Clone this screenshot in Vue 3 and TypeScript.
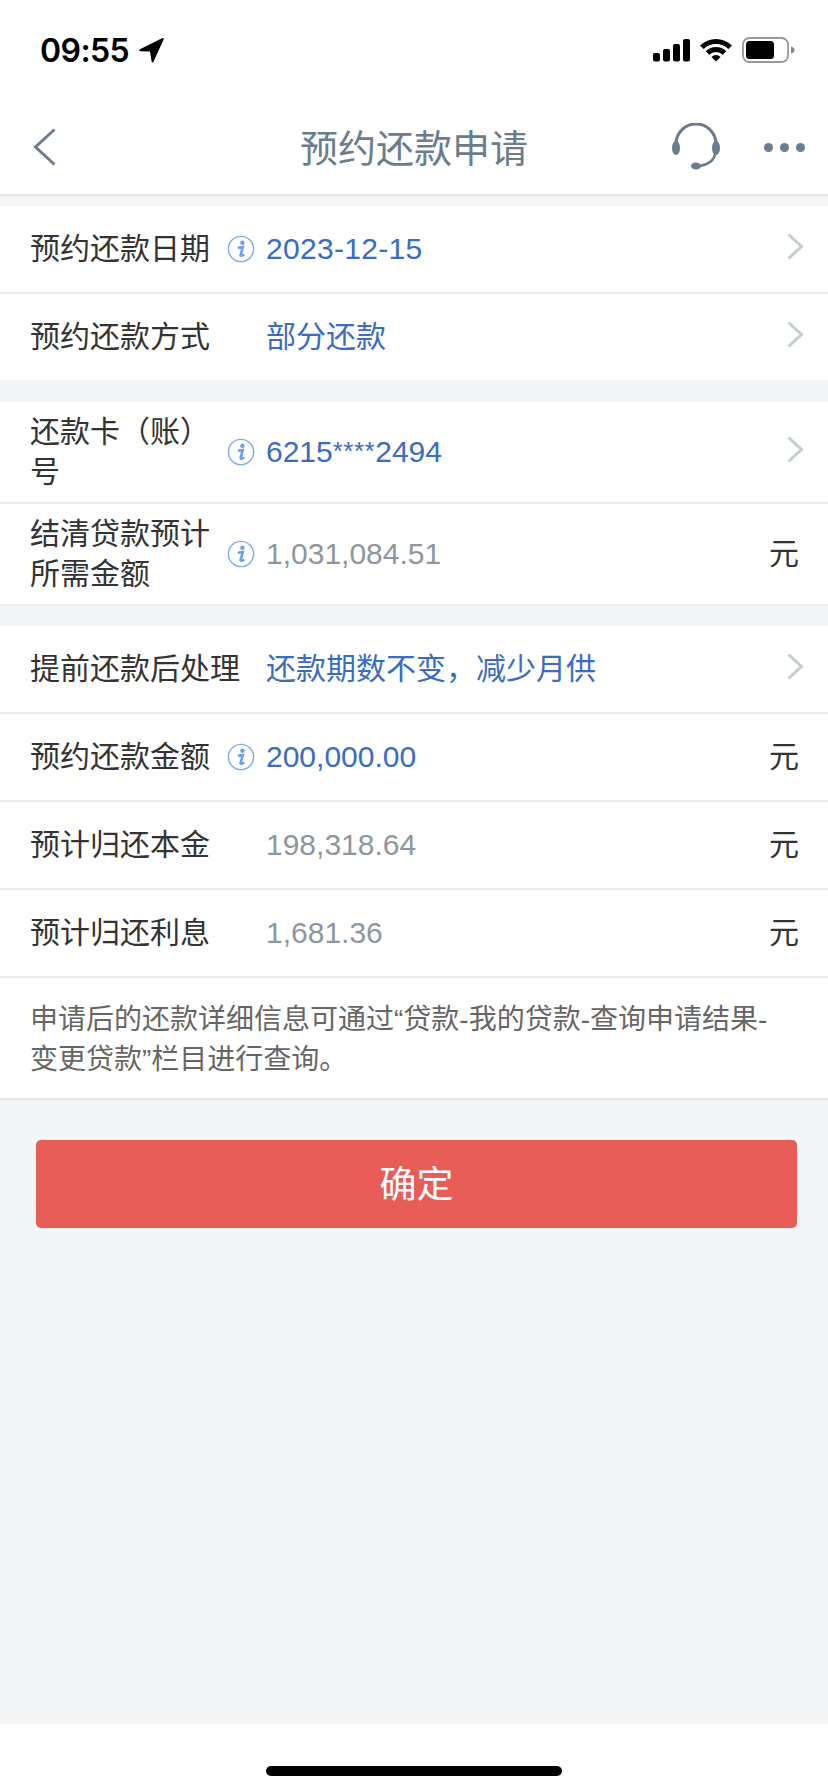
<script setup lang="ts">
type Row = {
  label: string;
  value: string;
  info?: boolean;
  tone: "blue" | "gray";
  end: "arrow" | "unit";
  tall?: boolean;
  wide?: boolean;
  cjk?: boolean;
  date?: boolean;
};

const groupOne: Row[] = [
  { label: "预约还款日期", value: "2023-12-15", info: true, tone: "blue", end: "arrow", date: true },
  { label: "预约还款方式", value: "部分还款", tone: "blue", end: "arrow", cjk: true },
];
const groupTwo: Row[] = [
  { label: "还款卡（账）号", value: "6215****2494", info: true, tone: "blue", end: "arrow", tall: true },
  { label: "结清贷款预计所需金额", value: "1,031,084.51", info: true, tone: "gray", end: "unit", tall: true },
];
const groupThree: Row[] = [
  { label: "提前还款后处理", value: "还款期数不变，减少月供", tone: "blue", end: "arrow", wide: true, cjk: true },
  { label: "预约还款金额", value: "200,000.00", info: true, tone: "blue", end: "unit" },
  { label: "预计归还本金", value: "198,318.64", tone: "gray", end: "unit" },
  { label: "预计归还利息", value: "1,681.36", tone: "gray", end: "unit" },
];
const groups = [groupOne, groupTwo, groupThree];

// the card number's asterisks are drawn smaller than the digits
const splitStars = (value: string) => value.split(/(\*+)/);
</script>

<template>
  <div class="page">
    <div class="status-bar">
      <div class="time">
        <span>09:55</span>
        <svg class="location" width="25" height="25" viewBox="0 0 25 25">
          <path d="M24.6 1.6 L14.6 23.6 Q13.4 25.4 12.6 23.4 L11 13.6 L1.4 13.2 Q-0.6 12.4 1 11.2 L22.4 0.4 Q25.4 -0.6 24.6 1.6 Z" fill="#000" />
        </svg>
      </div>
      <div class="status-icons">
        <svg width="37" height="23" viewBox="0 0 37 23">
          <rect x="0" y="14" width="7" height="8.5" rx="2" fill="#000" />
          <rect x="10" y="10" width="7" height="12.5" rx="2" fill="#000" />
          <rect x="20" y="5" width="7" height="17.5" rx="2" fill="#000" />
          <rect x="30" y="0" width="7" height="22.5" rx="2" fill="#000" />
        </svg>
        <svg width="32" height="23" viewBox="0 0 32 23">
          <path d="M0.1 6.6 A22.5 22.5 0 0 1 31.9 6.6 L28.4 10.1 A17.5 17.5 0 0 0 3.6 10.1 Z" fill="#000" />
          <path d="M5.8 12.3 A14.5 14.5 0 0 1 26.2 12.3 L22.7 15.8 A9.5 9.5 0 0 0 9.3 15.8 Z" fill="#000" />
          <path d="M11.4 17.9 A6.5 6.5 0 0 1 20.6 17.9 L16 22.5 Z" fill="#000" />
        </svg>
        <svg width="54" height="26" viewBox="0 0 54 26">
          <rect x="1" y="1" width="45" height="24" rx="6.5" fill="none" stroke="#999" stroke-width="1.8" />
          <rect x="4" y="4" width="28" height="18" rx="3.5" fill="#000" />
          <path d="M49 9.5 Q52.5 10.5 52.5 13 Q52.5 15.5 49 16.5 Z" fill="#888" />
        </svg>
      </div>
    </div>

    <header class="nav">
      <div class="nav-left">
        <svg width="24" height="38" viewBox="0 0 24 38">
          <path d="M21.5 1.5 L2.5 19 L21.5 36.5" fill="none" stroke="#6b7c8c" stroke-width="3" />
        </svg>
      </div>
      <h1 class="title">预约还款申请</h1>
      <div class="nav-right">
        <svg width="48" height="47" viewBox="0 0 48 47">
          <path d="M4 21 A20 20 0 0 1 44 21" fill="none" stroke="#6b7c8c" stroke-width="3" />
          <ellipse cx="4" cy="25" rx="4" ry="7" fill="#6b7c8c" />
          <ellipse cx="44" cy="25" rx="4" ry="7" fill="#6b7c8c" />
          <path d="M43 30 C43 37 36 42 27 43" fill="none" stroke="#6b7c8c" stroke-width="2.6" />
          <ellipse cx="24" cy="43" rx="5" ry="3.6" fill="#6b7c8c" />
        </svg>
        <div class="dots">
          <i></i><i></i><i></i>
        </div>
      </div>
    </header>

    <main class="content">
      <section v-for="(group, g) in groups" :key="g" class="group">
        <div v-for="row in group" :key="row.label" class="row" :class="{ tall: row.tall }">
          <div class="label" :class="{ wide: row.wide }">{{ row.label }}</div>
          <div class="info-slot">
            <svg v-if="row.info" width="28" height="28" viewBox="0 0 28 28">
              <circle cx="14" cy="14" r="12.6" fill="#fff" stroke="#82abf0" stroke-width="1.4" />
              <circle cx="15.4" cy="7.8" r="2.2" fill="#6f9eec" />
              <path d="M10.8 12.8 L15.8 12 L13.6 20 Q13.4 21.6 17.4 19.6" fill="none" stroke="#6f9eec" stroke-width="2.6" />
            </svg>
          </div>
          <div class="value" :class="[row.tone, { cjk: row.cjk, date: row.date }]">
            <template v-for="(part, p) in splitStars(row.value)" :key="p">
              <span v-if="part.startsWith('*')" class="stars">{{ part }}</span>
              <template v-else>{{ part }}</template>
            </template>
          </div>
          <svg v-if="row.end === 'arrow'" class="arrow" width="17" height="27" viewBox="0 0 17 27">
            <path d="M1.5 1.5 L14.5 13.5 L1.5 25.5" fill="none" stroke="#c2cfcf" stroke-width="3" />
          </svg>
          <div v-else class="unit">元</div>
        </div>
      </section>
      <p class="note">申请后的还款详细信息可通过“贷款-我的贷款-查询申请结果-变更贷款”栏目进行查询。</p>
      <button class="confirm" type="button">确定</button>
    </main>

    <footer class="home">
      <div class="home-bar"></div>
    </footer>
  </div>
</template>

<style>
body {
  margin: 0;
}
</style>

<style scoped>
.page {
  width: 828px;
  height: 1792px;
  display: flex;
  flex-direction: column;
  background: #f4f5f7;
  font-family: "Liberation Sans", "Noto Sans CJK SC", sans-serif;
  overflow: hidden;
}

.status-bar {
  height: 88px;
  flex: none;
  display: flex;
  justify-content: space-between;
  align-items: center;
  padding: 12px 32px 0 40px;
  box-sizing: border-box;
  background: #fff;
}

.time {
  display: flex;
  align-items: center;
  gap: 10px;
  font-family: Inter, "Liberation Sans", sans-serif;
  font-size: 32px;
  font-weight: 600;
  letter-spacing: -0.6px;
  color: #000;
}

.status-icons {
  display: flex;
  align-items: center;
  gap: 10px;
}

.nav {
  height: 108px;
  flex: none;
  display: grid;
  grid-template-columns: 1fr auto 1fr;
  align-items: center;
  box-sizing: border-box;
  padding: 10px 23px 0;
  background: #fff;
  border-bottom: 2px solid #e5e6e8;
}

.nav-left {
  padding: 2px 0 0 10px;
}

.nav-left svg,
.nav-right svg {
  display: block;
}

.nav-right {
  display: flex;
  align-items: center;
  justify-content: flex-end;
}

.title {
  margin: -2px 0 0;
  font-size: 38px;
  font-weight: 400;
  color: #6b7c8c;
}

.dots {
  display: flex;
  gap: 7px;
  margin-left: 44px;
  margin-top: 2px;
}

.dots i {
  width: 9px;
  height: 9px;
  border-radius: 50%;
  background: #6b7c8c;
}

.content {
  flex: 1;
  display: flex;
  flex-direction: column;
  padding-top: 10px;
}

.group {
  background: #fff;
  margin-bottom: 20px;
}

.group:first-of-type {
  margin-bottom: 22px;
}

.group:nth-of-type(3) {
  margin-bottom: 0;
}

.row {
  height: 88px;
  box-sizing: border-box;
  display: flex;
  align-items: center;
  padding: 0 29px 0 30px;
  border-bottom: 2px solid #ececee;
  font-size: 30px;
}

.row.tall {
  height: 102px;
}

.group:first-of-type .row:last-child {
  border-bottom: none;
  height: 86px;
}

.label {
  width: 180px;
  flex: none;
  line-height: 40px;
  color: #333;
}

.label.wide {
  white-space: nowrap;
}

.info-slot {
  width: 56px;
  flex: none;
  padding-left: 17px;
  box-sizing: border-box;
}

.info-slot svg {
  display: block;
}

.value {
  flex: 1;
}

.value.cjk {
  line-height: 40px;
}

.value.date {
  letter-spacing: 0.3px;
}

.value.blue {
  color: #3a6cc4;
}

.value.gray {
  color: #8e979d;
}

.stars {
  font-size: 26px;
  letter-spacing: 0.5px;
  vertical-align: 2px;
}

.arrow {
  flex: none;
  margin-right: -5px;
  margin-top: -5px;
}

.unit {
  flex: none;
  line-height: 40px;
  color: #333;
}

.note {
  margin: 0;
  padding: 22px 50px 18px 30px;
  background: #fff;
  border-bottom: 2px solid #e5e6e8;
  font-size: 28px;
  line-height: 40px;
  color: #666;
}

.confirm {
  display: block;
  width: 761px;
  height: 88px;
  margin: 40px 0 0 36px;
  padding: 0 0 4px;
  border: none;
  border-radius: 5px;
  background: #e95d58;
  color: #fff;
  font-family: inherit;
  font-size: 37px;
}

.home {
  height: 68px;
  flex: none;
  background: #fff;
  display: flex;
  justify-content: center;
  padding-top: 42px;
  box-sizing: border-box;
}

.home-bar {
  width: 296px;
  height: 10px;
  border-radius: 5px;
  background: #000;
}
</style>
